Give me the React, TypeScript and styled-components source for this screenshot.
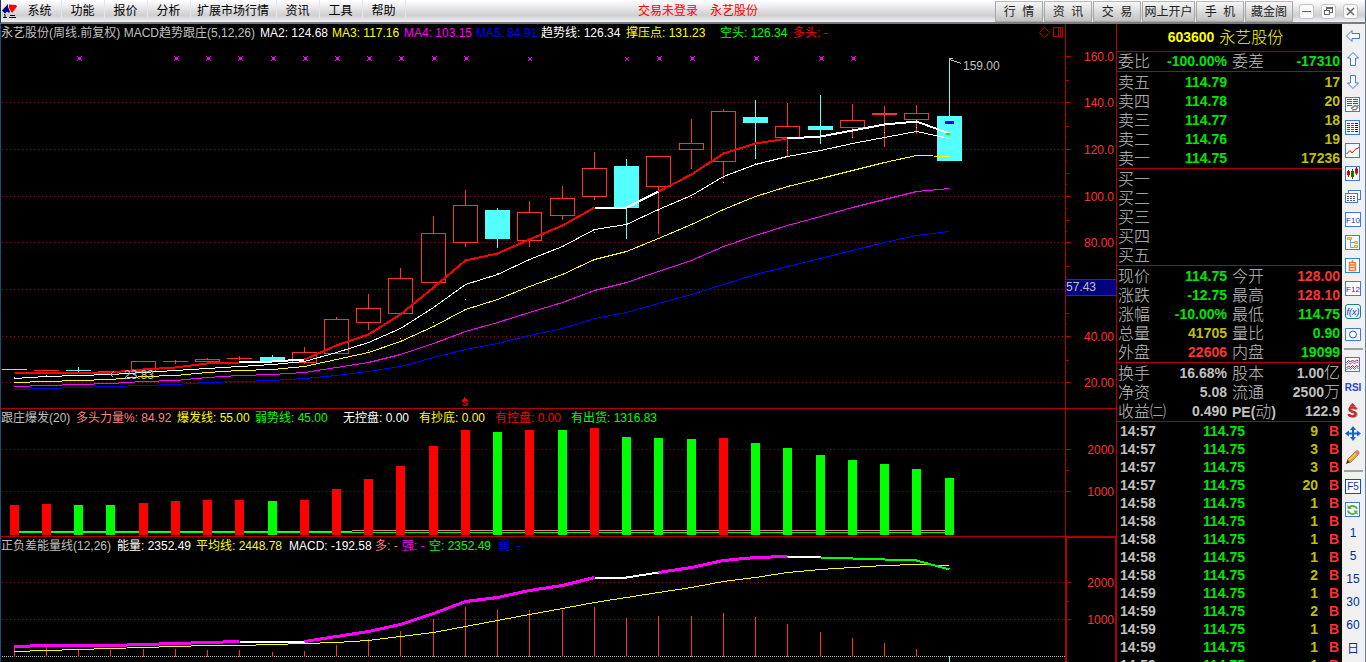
import React from "react";
import styled, { createGlobalStyle, css } from "styled-components";

const RED = "#ff3232";
const LINE = "#b40000";
const GREY = "#c0c0c0";
const GREEN = "#00e600";
const OLIVE = "#c0c000";
const CYAN = "#54ffff";

const GlobalStyle = createGlobalStyle`
  * { box-sizing: border-box; }
  html, body { margin: 0; background: #000; overflow: hidden; }
  body, button, table {
    font-family: "Liberation Sans", "Noto Sans CJK SC", sans-serif;
    font-size: 12px;
  }
`;

const Window = styled.div`
  display: flex;
  flex-direction: column;
  height: 100vh;
  min-height: 400px;
  background: #000;
  overflow: hidden;
`;

/* ---------- title bar ---------- */

const TitleBar = styled.header`
  flex: none;
  display: grid;
  grid-template-columns: 1fr auto 1fr;
  align-items: center;
  height: 24px;
  border-left: 1px solid #16365c;
  border-right: 1px solid #4a7090;
  border-bottom: 2px solid #7c7c7c;
  background: linear-gradient(#ffffff 0%, #f4f4f8 18%, #d0d0d0 68%, #d4d4d6 76%, #e6e6ee 90%, #eeeef4 100%);
`;

const MenuArea = styled.div`
  display: flex;
  align-items: center;
`;

const Logo = styled.svg`
  display: block;
  width: 18px;
  height: 18px;
`;

const Menu = styled.nav`
  display: flex;
`;

const MenuItem = styled.button<{ $wide?: boolean }>`
  width: ${(p) => (p.$wide ? 86 : 43)}px;
  height: 22px;
  padding: 1px 1px 0 0;
  border: 0;
  border-right: 1px solid #e4e4ea;
  background: none;
  color: #000;
  line-height: 21px;
  white-space: nowrap;
`;

const Status = styled.div`
  display: flex;
  gap: 12px;
  padding: 1px 0 0 30px;
  color: #f00;
  line-height: 21px;
`;

const TitleActions = styled.div`
  display: flex;
  justify-content: flex-end;
  align-items: center;
  gap: 1px;
  padding-right: 7px;
`;

const TitleButton = styled.button`
  width: 48px;
  height: 21px;
  padding: 1px 0 0;
  border: 1px solid #a8a8a8;
  border-top-color: #b8b8b8;
  background: linear-gradient(#f6f6f6, #dcdcdc 50%, #c2c2c2);
  color: #222;
  line-height: 18px;
  white-space: nowrap;
  &:nth-of-type(4) { width: 53px; }
`;

const WindowButtons = styled.div`
  display: flex;
  gap: 7px;
  margin-left: 5px;
`;

const WindowButton = styled.button`
  width: 15px;
  height: 15px;
  padding: 0;
  border: 1px solid #c4c4c4;
  border-radius: 3px;
  background: #fafafa;
  svg { display: block; width: 13px; height: 13px; }
`;

/* ---------- body ---------- */

const Body = styled.div`
  flex: 1;
  display: flex;
  min-height: 0;
  border-left: 1px solid #1b5078;
`;

const Charts = styled.main`
  flex: 1;
  display: flex;
  flex-direction: column;
  min-width: 0;
`;

const Pane = styled.section<{ $height?: number }>`
  display: grid;
  grid-template-columns: minmax(0, 1fr) 51px;
  grid-template-rows: minmax(0, 1fr);
  ${(p) => (p.$height ? css`flex: none; height: ${p.$height}px; border-bottom: 1px solid ${LINE};` : css`flex: 1; min-height: 0;`)}
`;

const Legend = styled.div<{ $cols: string }>`
  grid-area: 1 / 1;
  display: grid;
  grid-template-columns: ${(p) => p.$cols} 1fr auto;
  height: 19px;
  line-height: 19px;
  white-space: nowrap;
  z-index: 1;
`;

const LegendItem = styled.span<{ $color: string }>`
  color: ${(p) => p.$color};
`;

const LegendTools = styled.svg`
  grid-column: -2;
  width: 26px;
  height: 17px;
`;

const Plot = styled.svg`
  grid-area: 1 / 1;
  display: block;
  width: 100%;
  height: 100%;
  shape-rendering: crispEdges;
  overflow: hidden;
  font-size: 12px;
`;

const AxisBox = styled.div<{ $active?: boolean }>`
  grid-area: 1 / 2;
  overflow: hidden;
  border-left: ${(p) => (p.$active ? 2 : 1)}px solid ${LINE};
  ${(p) => p.$active && css`border-top: 1px solid ${LINE}; border-right: 1px solid ${LINE};`}
  svg {
    display: block;
    width: 100%;
    height: 100%;
    shape-rendering: crispEdges;
    font-size: 12px;
  }
`;

/* ---------- quote panel ---------- */

const Quote = styled.aside`
  flex: none;
  width: 226px;
  border-left: 1px solid ${LINE};
  overflow: hidden;
  color: ${GREY};
`;

const StockTitle = styled.h1`
  display: flex;
  justify-content: center;
  align-items: center;
  gap: 5px;
  height: 28px;
  margin: 0;
  padding-right: 8px;
  border-bottom: 1px solid ${LINE};
  color: #ff0;
  font-size: 16px;
  font-weight: 300;
  line-height: 27px;
  b { font-size: 14px; font-weight: 700; }
`;

const Table = styled.table`
  width: 100%;
  table-layout: fixed;
  border-collapse: collapse;
  th, td { padding: 0; white-space: nowrap; }
`;

const Block = styled.div<{ $pad?: boolean }>`
  padding-top: ${(p) => (p.$pad ? 1 : 0)}px;
  border-bottom: 1px solid ${LINE};
`;

const QuoteRow = styled.tr`
  height: 19px;
  line-height: 19px;
`;

const Label = styled.th<{ $second?: boolean }>`
  padding-left: ${(p) => (p.$second ? 5 : 1)}px !important;
  overflow: visible;
  font-size: 16px;
  font-weight: 300;
  text-align: left;
  b { font-size: 14px; font-weight: 700; line-height: 1; }
`;

const Value = styled.td<{ $color?: string; $last?: boolean }>`
  padding-right: ${(p) => (p.$last ? 2 : 0)}px !important;
  color: ${(p) => p.$color || GREY};
  font-size: 14px;
  font-weight: 700;
  text-align: right;
  i { font-size: 16px; font-style: normal; font-weight: 300; line-height: 1; }
`;

const TradeRow = styled.tr`
  height: 18px;
  line-height: 18px;
  font-size: 14px;
  font-weight: 700;
`;

const TradeCell = styled.td<{ $color: string; $left?: boolean; $side?: boolean }>`
  padding-left: ${(p) => (p.$left ? 3 : 0)}px !important;
  padding-right: ${(p) => (p.$side ? 3 : 0)}px !important;
  color: ${(p) => p.$color};
  text-align: ${(p) => (p.$left ? "left" : "right")};
`;

/* ---------- tool strip ---------- */

const Strip = styled.nav`
  flex: none;
  display: flex;
  flex-direction: column;
  width: 24px;
  border-right: 1px solid #6a8094;
  background: #f0f0f0;
  overflow: hidden;
`;

const ToolButton = styled.button`
  flex: none;
  display: flex;
  justify-content: center;
  align-items: center;
  width: 22px;
  height: 23px;
  padding: 0;
  border: 0;
  background: none;
  color: #003090;
  svg { display: block; width: 16px; height: 16px; overflow: visible; }
`;

const Separator = styled.hr`
  flex: none;
  width: 19px;
  height: 2px;
  margin: 2px 2px 3px;
  border: 0;
  background: #a0a0a0;
`;

/* ---------- data ---------- */

const X = (i: number) => Math.floor(13.1 + 32.24 * i);

type Candle = [kind: "up" | "down", top: number, bottom: number, high: number, low: number];
const candles: Candle[] = [
  ["down", 369, 370, 369, 370], ["up", 370, 370, 370, 370], ["down", 370, 371, 367, 373],
  ["up", 371, 371, 371, 371], ["up", 361, 371, 361, 371], ["up", 361, 361, 360, 364],
  ["up", 359, 361, 358, 361], ["up", 358, 358, 356, 360], ["down", 357, 361, 355, 361],
  ["up", 352, 362, 347, 364], ["up", 319, 353, 317, 353], ["up", 308, 322, 294, 330],
  ["up", 278, 313, 268, 313], ["up", 233, 282, 216, 282], ["up", 205, 242, 190, 247],
  ["down", 210, 239, 208, 248], ["up", 212, 240, 201, 247], ["up", 198, 215, 186, 220],
  ["up", 168, 196, 152, 200], ["down", 166, 208, 159, 239], ["up", 156, 186, 156, 234],
  ["up", 143, 149, 119, 169], ["up", 111, 161, 109, 179], ["down", 117, 123, 100, 159],
  ["up", 126, 137, 103, 156], ["down", 126, 130, 95, 144], ["up", 120, 127, 104, 137],
  ["up", 113, 114, 106, 147], ["up", 113, 119, 105, 134], ["down", 116, 161, 58, 161],
];

const trend = [372, 372, 372, 372, 369, 367, 363, 362, 361, 359, 345, 334, 314, 287, 260, 253, 239, 225, 207, 207, 191, 174, 153, 143, 138, 136, 130, 124, 121, 133];
const ma2 = [378, 376, 375, 374, 372, 370, 368, 366, 364, 361, 352, 342, 328, 307, 284, 274, 259, 246, 229, 224, 209, 195, 176, 164, 156, 150, 143, 137, 131, 138];
const ma3 = [382, 381, 380, 379, 376, 375, 372, 370, 369, 366, 359, 352, 341, 326, 309, 299, 286, 274, 259, 251, 238, 224, 209, 196, 186, 178, 170, 162, 155, 156];
const ma4 = [386, 385, 384, 383, 381, 380, 377, 375, 374, 372, 367, 362, 354, 343, 331, 322, 312, 302, 290, 282, 271, 260, 246, 235, 225, 216, 207, 199, 191, 188];
const ma5 = [389, 388, 387, 386, 385, 384, 382, 381, 380, 378, 375, 371, 366, 357, 349, 343, 335, 328, 318, 312, 303, 294, 284, 274, 266, 258, 250, 242, 235, 231];
const supports: [number, number][] = [[0, 377], [1, 375], [11, 350], [12, 338], [13, 322], [14, 299], [15, 273], [16, 259], [17, 246], [18, 232], [19, 215], [20, 210], [21, 197], [22, 182], [23, 163], [24, 150], [25, 142], [26, 137], [27, 132], [28, 127]];
const markers = [2, 5, 6, 7, 8, 9, 10, 11, 12, 13, 14, 16, 19, 20, 21, 23, 25, 26];

const barTops = [505, 504, 505, 505, 503, 501, 500, 500, 501, 500, 489, 479, 466, 446, 430, 432, 430, 430, 428, 437, 438, 439, 438, 443, 448, 455, 460, 464, 469, 478];
const greenBars = [2, 3, 8, 15, 17, 19, 20, 21, 23, 24, 25, 26, 27, 28, 29];

const energy = [646, 645, 645, 645, 644, 643, 642, 641, 641, 641, 636, 631, 624, 613, 601, 597, 590, 585, 577, 577, 572, 567, 560, 557, 556, 557, 558, 559, 560, 569];
const average = [651, 650, 649, 648, 647, 646, 645, 645, 644, 643, 642, 640, 636, 632, 626, 620, 614, 608, 602, 597, 592, 587, 581, 577, 572, 569, 567, 565, 564, 565];
const stems = [647, 647, 649, 650, 649, 649, 650, 650, 652, 651, 645, 639, 631, 619, 607, 610, 610, 610, 607, 618, 616, 616, 613, 617, 624, 632, 638, 643, 649];

const points = (ys: number[], from = 0, to = ys.length - 1) =>
  ys.slice(from, to + 1).map((y, k) => `${X(from + k) + 0.5},${y + 0.5}`).join(" ");

const Series = ({ ys, color, width = 1, from, to }: { ys: number[]; color: string; width?: number; from?: number; to?: number }) => (
  <polyline points={points(ys, from, to)} fill="none" stroke={color} strokeWidth={width} />
);

const GridLine = ({ y, color = LINE, dash = "1 3" }: { y: number; color?: string; dash?: string }) => (
  <line x1="1" x2="100%" y1={y + 0.5} y2={y + 0.5} stroke={color} strokeDasharray={dash} />
);

const CandleShape = ({ i, c }: { i: number; c: Candle }) => {
  const [kind, top, bottom, high, low] = c;
  const x = X(i);
  if (kind === "down") {
    return (
      <g fill={CYAN}>
        <rect x={x} y={high} width="1" height={low - high} />
        <rect x={x - 12} y={top} width="25" height={bottom - top} />
      </g>
    );
  }
  return (
    <g fill={RED}>
      <rect x={x} y={high} width="1" height={top - high} />
      <rect x={x} y={bottom} width="1" height={low - bottom} />
      {bottom - top > 1 ? (
        <rect x={x - 11.5} y={top + 0.5} width="24" height={bottom - top} fill="none" stroke={RED} />
      ) : (
        <rect x={x - 12} y={top} width="25" height={bottom - top + 1} />
      )}
    </g>
  );
};

type Tick = [y: number, label: string];
const Axis = ({ ticks, top, step, divisions, active, children }: { ticks: Tick[]; top: number; step: number; divisions: number; active?: boolean; children?: React.ReactNode }) => (
  <AxisBox $active={active}>
    <svg>
      <g transform={`translate(${active ? -1 : 0} ${-top})`}>
        {ticks.map(([y, label], t) => (
          <g key={y}>
            <rect x="0" y={y} width="5" height="1" fill={LINE} />
            {t < ticks.length - 1 && Array.from({ length: divisions - 1 }, (_, k) => k + 1).map((k) => (
              <rect key={k} x="0" y={Math.round(y + (step * k) / divisions)} width={k * 2 === divisions ? 3 : 1} height="1" fill={LINE} />
            ))}
            {label && <text x="48" y={y + 5} textAnchor="end" fill={RED}>{label}</text>}
          </g>
        ))}
        {children}
      </g>
    </svg>
  </AxisBox>
);

/* ---------- panes ---------- */

type Entry = [text: string, color: string];
const legend1: Entry[] = [
  ["永艺股份(周线.前复权) MACD趋势跟庄(5,12,26)", GREY], ["MA2: 124.68", "#fff"], ["MA3: 117.16", "#ff0"],
  ["MA4: 103.15", "#f0f"], ["MA5: 84.91", "#00f"], ["趋势线: 126.34", "#fff"], ["撑压点: 131.23", "#ff0"],
  ["空头: 126.34", "#0f0"], ["多头: -", "#f00"],
];
const legend2: Entry[] = [
  ["跟庄爆发(20)", GREY], ["多头力量%: 84.92", "#ff8080"], ["爆发线: 55.00", "#ff0"], ["弱势线: 45.00", "#0f0"],
  ["无控盘: 0.00", "#fff"], ["有抄底: 0.00", "#ff0"], ["有控盘: 0.00", "#f00"], ["有出货: 1316.83", "#0f0"],
];
const legend3: Entry[] = [
  ["正负差能量线(12,26)", GREY], ["能量: 2352.49", "#fff"], ["平均线: 2448.78", "#ff0"], ["MACD: -192.58", "#fff"],
  ["多: -", "#ff8080"], ["强: -", "#f0f"], ["空: 2352.49", "#0f0"], ["弱: -", "#00f"],
];

const Entries = ({ items }: { items: Entry[] }) => (
  <>{items.map(([text, color]) => <LegendItem key={text} $color={color}>{text}</LegendItem>)}</>
);

const PricePane = () => (
  <Pane $height={385}>
    <Legend $cols="259px 72px 72px 72px 65px 85px 94px 73px 40px">
      <Entries items={legend1} />
      <LegendTools fill="none" stroke={LINE}>
        <path d="M5.5 3.5l5 5-5 5-5-5z" />
        <path d="M14.500 3.500h9v9h-9zM19.500 3.500v9M21.500 3.500v9" shapeRendering="crispEdges" />
      </LegendTools>
    </Legend>
    <Plot>
      <g transform="translate(0 -24)">
        {[102, 149, 196, 242, 289, 336, 382].map((y) => <GridLine key={y} y={y} />)}
        {markers.map((i) => (
          <g key={i} fill="#f0f">
            {i === 16 || i === 19 ? (
              <path d={`M${X(i) - 1} 57h1v1h2v-1h1v1h-1v2h1v1h-1v-1h-2v1h-1v-1h1v-2h-1z`} />
            ) : (
              <path d={`M${X(i) - 1} 56h1v1h3v-1h1v1h-1v3h1v1h-1v-1h-3v1h-1v-1h1v-3h-1z`} />
            )}
          </g>
        ))}
        {candles.map((c, i) => <CandleShape key={i} i={i} c={c} />)}
        <Series ys={ma5} color="#00f" />
        <Series ys={ma4} color="#f0f" />
        <Series ys={ma3} color="#ff0" />
        <Series ys={ma2} color="#fff" />
        <Series ys={trend} color="#f00" width={2} to={7} />
        <Series ys={trend} color="#fff" width={2} from={7} to={9} />
        <Series ys={trend} color="#f00" width={2} from={9} to={18} />
        <Series ys={trend} color="#fff" width={2} from={18} to={20} />
        <Series ys={trend} color="#f00" width={2} from={20} to={24} />
        <Series ys={trend} color="#fff" width={2} from={24} to={29} />
        {supports.map(([i, y]) => <rect key={i} x={X(i)} y={y} width="1" height="1" fill="#ff0" />)}
        <rect x="944" y="121" width="9" height="3" fill="#00f" />
        <rect x="945" y="133" width="4" height="2" fill="#0f0" />
        <path d="M948.500 58.500h3M948.500 58.500v4M949 59.500l11 4" stroke={GREY} fill="none" />
        <text x="962" y="70" fill={GREY}>159.00</text>
        <path d="M109.500 374.500h6M112.500 371.500l-3 3 3 3" stroke={GREY} fill="none" />
        <text x="123" y="379" fill={GREY}>23.83</text>
        <path d="M461 400.500h6M462 399.500h4M463.500 397v3" stroke="#f00" />
        <text x="464" y="406" textAnchor="middle" fill="#f00" fontSize="9" fontWeight="700">S</text>
      </g>
    </Plot>
    <Axis top={24} step={47} divisions={4} ticks={[[56, "160.0"], [102, "140.0"], [149, "120.0"], [196, "100.0"], [242, "80.00"], [289, ""], [336, "40.00"], [382, "20.00"]]}>
      <rect x="0" y="279" width="50" height="17" fill={LINE} />
      <rect x="0" y="280" width="50" height="15" fill="#000080" />
      <text x="0" y="291" fill={GREY}>57.43</text>
    </Axis>
  </Pane>
);

const BurstPane = () => (
  <Pane $height={128}>
    <Legend $cols="75px 101px 78px 88px 76px 76px 76px 90px">
      <Entries items={legend2} />
    </Legend>
    <Plot>
      <g transform="translate(0 -409)">
        <GridLine y={449} color="#900000" />
        <GridLine y={491} color="#900000" />
        <path d="M18 531.500H351" stroke="#ff8080" />
        <path d="M351 530.500H949" stroke="#ff8080" />
        <path d="M18 532.500H949" stroke="#0f0" />
        {barTops.map((y, i) => (
          <rect key={i} x={X(i) - 4} y={y} width="9" height={535 - y} fill={greenBars.includes(i) ? "#0f0" : "#f00"} />
        ))}
      </g>
    </Plot>
    <Axis top={409} step={42} divisions={4} ticks={[[449, "2000"], [491, "1000"]]} />
  </Pane>
);

const EnergyPane = () => (
  <Pane>
    <Legend $cols="116px 79px 93px 86px 27px 27px 69px 40px">
      <Entries items={legend3} />
    </Legend>
    <Plot>
      <g transform="translate(0 -537)">
        <GridLine y={582} />
        <GridLine y={619} />
        <GridLine y={656} color="#c0c0c0" dash="1 1" />
        {stems.map((y, i) => <rect key={i} x={X(i)} y={y} width="1" height={657 - y} fill={RED} />)}
        <rect x={X(29)} y="656" width="1" height="8" fill={CYAN} />
        <Series ys={average} color="#ff0" />
        <Series ys={energy} color="#f0f" width={3} to={7} />
        <Series ys={energy} color="#fff" width={2} from={7} to={9} />
        <Series ys={energy} color="#f0f" width={3} from={9} to={18} />
        <Series ys={energy} color="#fff" width={2} from={18} to={20} />
        <Series ys={energy} color="#f0f" width={3} from={20} to={24} />
        <Series ys={energy} color="#fff" width={2} from={24} to={25} />
        <Series ys={energy} color="#0f0" width={2} from={25} to={29} />
      </g>
    </Plot>
    <Axis active top={538} step={37} divisions={2} ticks={[[582, "2000"], [619, "1000"]]} />
  </Pane>
);

/* ---------- quote data ---------- */

const sells = [["卖五", "114.79", "17"], ["卖四", "114.78", "20"], ["卖三", "114.77", "18"], ["卖二", "114.76", "19"], ["卖一", "114.75", "17236"]];
const buys = ["买一", "买二", "买三", "买四", "买五"];
const prices: [string, string, string, string, string, string][] = [
  ["现价", "114.75", GREEN, "今开", "128.00", RED],
  ["涨跌", "-12.75", GREEN, "最高", "128.10", RED],
  ["涨幅", "-10.00%", GREEN, "最低", "114.75", GREEN],
  ["总量", "41705", OLIVE, "量比", "0.90", GREEN],
  ["外盘", "22606", RED, "内盘", "19099", GREEN],
];
const trades: [string, string][] = [
  ["14:57", "9"], ["14:57", "3"], ["14:57", "3"], ["14:57", "20"], ["14:58", "1"], ["14:58", "1"], ["14:58", "1"],
  ["14:58", "1"], ["14:58", "2"], ["14:59", "1"], ["14:59", "2"], ["14:59", "1"], ["14:59", "1"], ["14:59", "1"],
];

const Columns = () => (
  <colgroup>
    <col width="36" /><col width="74" /><col width="39" /><col />
  </colgroup>
);

const QuotePanel = () => (
  <Quote>
    <StockTitle><b>603600</b>永艺股份</StockTitle>
    <Block>
      <Table>
        <Columns />
        <tbody>
          <QuoteRow>
            <Label scope="row">委比</Label><Value $color={GREEN}>-100.00%</Value>
            <Label scope="row" $second>委差</Label><Value $last $color={GREEN}>-17310</Value>
          </QuoteRow>
        </tbody>
      </Table>
    </Block>
    <Block $pad>
      <Table>
        <Columns />
        <tbody>
          {sells.map(([name, price, volume]) => (
            <QuoteRow key={name}>
              <Label scope="row">{name}</Label><Value $color={GREEN}>{price}</Value>
              <Value $last $color={OLIVE} colSpan={2}>{volume}</Value>
            </QuoteRow>
          ))}
        </tbody>
      </Table>
    </Block>
    <Block $pad>
      <Table>
        <Columns />
        <tbody>
          {buys.map((name) => (
            <QuoteRow key={name}><Label scope="row">{name}</Label><Value /><Value colSpan={2} /></QuoteRow>
          ))}
        </tbody>
      </Table>
    </Block>
    <Block $pad>
      <Table>
        <Columns />
        <tbody>
          {prices.map(([a, av, ac, b, bv, bc]) => (
            <QuoteRow key={a}>
              <Label scope="row">{a}</Label><Value $color={ac}>{av}</Value>
              <Label scope="row" $second>{b}</Label><Value $last $color={bc}>{bv}</Value>
            </QuoteRow>
          ))}
        </tbody>
      </Table>
    </Block>
    <Block $pad>
      <Table>
        <Columns />
        <tbody>
          <QuoteRow>
            <Label scope="row">换手</Label><Value>16.68%</Value>
            <Label scope="row" $second>股本</Label><Value $last>1.00<i>亿</i></Value>
          </QuoteRow>
          <QuoteRow>
            <Label scope="row">净资</Label><Value>5.08</Value>
            <Label scope="row" $second>流通</Label><Value $last>2500<i>万</i></Value>
          </QuoteRow>
          <QuoteRow>
            <Label scope="row">收益㈡</Label><Value>0.490</Value>
            <Label scope="row" $second><b>PE(</b>动<b>)</b></Label><Value $last>122.9</Value>
          </QuoteRow>
        </tbody>
      </Table>
    </Block>
    <Table>
      <colgroup>
        <col width="85" /><col width="43" /><col width="73" /><col />
      </colgroup>
      <tbody>
        {trades.map(([time, count], i) => (
          <TradeRow key={i}>
            <TradeCell $left $color={GREY}>{time}</TradeCell>
            <TradeCell $color={GREEN}>114.75</TradeCell>
            <TradeCell $color={OLIVE}>{count}</TradeCell>
            <TradeCell $side $color={RED}>B</TradeCell>
          </TradeRow>
        ))}
      </tbody>
    </Table>
  </Quote>
);

/* ---------- tool strip icons ---------- */

const Frame = ({ color = "#3c78e6", children }: { color?: string; children?: React.ReactNode }) => (
  <svg viewBox="0 0 16 16">
    <rect x=".5" y=".5" width="14" height="14" fill="#fff" stroke={color} shapeRendering="crispEdges" />
    {children}
  </svg>
);

const FrameText = ({ label, color = "#3c78e6", size = 8 }: { label: string; color?: string; size?: number }) => (
  <svg viewBox="0 0 16 16">
    <rect x=".5" y=".5" width="15" height="14" fill="#fff" stroke={color} shapeRendering="crispEdges" />
    <text x="8" y="11" textAnchor="middle" fontSize={size} fill="#1432b4">{label}</text>
  </svg>
);

const dashes = (x: number, color: string, rows: number[], width = 3) =>
  rows.map((y) => <rect key={x + "-" + y} x={x} y={y} width={width} height="1" fill={color} shapeRendering="crispEdges" />);

const arrowPath = "M1.500 8L7 2.500V5.500H14.500V10.500H7V13.500Z";
const Arrow = ({ turn }: { turn: number }) => (
  <svg viewBox="0 0 16 16"><path d={arrowPath} transform={`rotate(${turn} 8 8)`} fill="#fff" stroke="#3c78e6" /></svg>
);

const icons: [string, React.ReactNode][] = [
  ["后退", <Arrow turn={0} />],
  ["上一只", <Arrow turn={90} />],
  ["下一只", <Arrow turn={-90} />],
  ["报表", (
    <Frame>
      {dashes(2, "#009000", [2, 4, 6, 8], 5)}
      {dashes(8, "#ff0000", [2, 4, 6], 5)}
      <path d="M6 11.500l4-3 2 1 1.500-1.500M7 13l4-.5 2-3" fill="none" stroke="#888" strokeWidth="1.600" />
    </Frame>
  )],
  ["行情表", (
    <Frame>
      {dashes(2, "#ff0000", [3, 5, 7, 9, 11])}
      {dashes(6, "#009000", [3, 5, 7, 9, 11])}
      {dashes(10, "#0000ff", [3, 5, 7, 9, 11])}
    </Frame>
  )],
  ["分时图", <Frame><path d="M1.500 11l3.500-3.500 2 2.500 4-4.500 1 .5 2-2" fill="none" stroke="#e00000" /></Frame>],
  ["K线图", (
    <Frame>
      <path d="M3.500 4v7M11.500 1v8" stroke="#e00000" /><path d="M7.500 3v10" stroke="#008000" />
      <path d="M2 5h3v4H2zM10 2.500h3v5h-3z" fill="#e00000" /><path d="M6 5h3v6H6z" fill="#008000" />
    </Frame>
  )],
  ["多窗口", (
    <svg viewBox="0 0 16 16" shapeRendering="crispEdges">
      <path d="M3.500 1.500h12v9h-12zM.5 4.500h12v9H.5z" fill="#fff" stroke="#3c78e6" />
      <path d="M1 5h11v8H1z" fill="#fff" />
      <path d="M2 7.500h9M2 9.500h9M2 11.500h9" stroke="#555" strokeDasharray="2 1" />
    </svg>
  )],
  ["F10", <FrameText label="F10" />],
  ["结构树", (
    <Frame color="#1e8ce6">
      <path d="M5.500 4v8.500H9M5.500 7.500H9" fill="none" stroke="#64a0f0" />
      <path d="M2.500 2.500h4v2h-4zM9.500 6.500h3v2h-3zM9.500 10.500h3v2h-3z" fill="#ffe060" stroke="#e6a000" />
    </Frame>
  )],
  ["自选", (
    <Frame color="#1e8ce6">
      <path d="M4.500 4.500h6v8h-6zM4.500 7h6M4.500 9.500h6M7.500 2v2" fill="none" stroke="#ff7832" strokeWidth="1.500" />
    </Frame>
  )],
  ["F12", <FrameText label="F12" />],
  ["公式", (
    <svg viewBox="0 0 16 16">
      <rect x=".5" y=".5" width="15" height="14" rx="2.500" fill="#e8f4ff" stroke="#148282" />
      <text x="8" y="11" textAnchor="middle" fontSize="9" fontStyle="italic" fill="#1432b4">f(x)</text>
    </svg>
  )],
  ["圆圈", <svg viewBox="0 0 16 16"><path d="M.5 1.500h15v12H.5z" fill="#fff" stroke="#3c78e6" /><circle cx="8" cy="7.500" r="3.500" fill="none" stroke="#0064c8" /></svg>],
];

const wave = (y: number) => `M1.500 ${y}l2-2 2 1.500 2-2 2 2 2-2 2 1`;
const icons2: [string, React.ReactNode][] = [
  ["叠加", <Frame><path d={wave(5.5)} fill="none" stroke="#e00000" /><path d={wave(7.5)} fill="none" stroke="#6464e6" /><path d={wave(11)} fill="none" stroke="#e00000" /><path d={wave(13)} fill="none" stroke="#6464e6" /></Frame>],
  ["RSI", <svg viewBox="0 0 16 16"><text x="8" y="11" textAnchor="middle" fontSize="10" fontWeight="700" fill="#2846d2">RSI</text></svg>],
  ["信号", (
    <svg viewBox="0 0 16 16">
      <path d="M12 6.500c-1-2-6.500-2.300-6.500.5s6 1.500 6 4.500-6.500 2.500-7 0" fill="none" stroke="#999" strokeWidth="2.500" />
      <path d="M11 6c-1-2-6.500-2.300-6.500.5s6 1.500 6 4.500-6.500 2.500-7 0" fill="none" stroke="#c82828" strokeWidth="2.300" />
      <path d="M7.500 0L11 3.500H4z" fill="#c82828" />
    </svg>
  )],
  ["移动", (
    <svg viewBox="0 0 16 16" fill="#1464d2">
      <path d="M8 0l3 4H5zM8 15l3-4H5zM0 7.500l4-3v6zM16 7.500l-4-3v6z" /><path d="M8 3v10M3 7.500h10" stroke="#1464d2" strokeWidth="2" />
    </svg>
  )],
  ["画线", (
    <svg viewBox="0 0 16 16">
      <path d="M1 15l1.500-4.500 2.500 3z" fill="#503214" /><path d="M2.500 10.500L10 3l3 3-7.500 7.500z" fill="#f0a032" stroke="#a06414" strokeWidth=".7" />
      <path d="M4 11.500L11.500 4" stroke="#ffe090" /><path d="M10 3l1.500-1.500q2.500-.5 3 2.500L13 6z" fill="#e67878" stroke="#b09090" strokeWidth=".7" />
    </svg>
  )],
];

const icons3: [string, React.ReactNode][] = [
  ["F5", <FrameText label="F5" color="#0050c8" size={10} />],
  ["刷新", (
    <Frame>
      <path d="M12 7a4.500 3.500 0 0 0-7.500-2M3 8.500a4.500 3.500 0 0 0 7.500 2.500" fill="none" stroke="#50b43c" strokeWidth="2" />
      <path d="M2.500 2.500v4.500h4.500zM12.500 13V8.500H8z" fill="#50b43c" />
    </Frame>
  )],
  ["1分钟", "1"], ["5分钟", "5"], ["15分钟", "15"], ["30分钟", "30"], ["60分钟", "60"], ["日线", "日"],
];

const Tools = ({ items }: { items: [string, React.ReactNode][] }) => (
  <>{items.map(([name, icon]) => <ToolButton key={name} aria-label={name}>{icon}</ToolButton>)}</>
);

/* ---------- page ---------- */

export default function App() {
  return (
    <Window>
      <GlobalStyle />
      <TitleBar>
        <MenuArea>
          <Logo viewBox="0 0 18 18" aria-hidden="true">
            <path d="M1 8.500L7 2v3l2 4.500-1 1.500-2-1.500-2 2z" fill="#000080" />
            <path d="M8 2.500l7 .5 1 1.500-5 6.500-3-5z" fill="#f00" />
            <path d="M3 12.500h1v3M2 15.500h4M8 15.500h7M9 13.500h5" stroke="#000" fill="none" />
          </Logo>
          <Menu>
            {["系统", "功能", "报价", "分析", "扩展市场行情", "资讯", "工具", "帮助"].map((name) => (
              <MenuItem key={name} $wide={name.length > 2}>{name}</MenuItem>
            ))}
          </Menu>
        </MenuArea>
        <Status><span>交易未登录</span><span>永艺股份</span></Status>
        <TitleActions>
          {["行\u00a0\u00a0情", "资\u00a0\u00a0讯", "交\u00a0\u00a0易", "网上开户", "手\u00a0\u00a0机", "藏金阁"].map((name) => (
            <TitleButton key={name}>{name}</TitleButton>
          ))}
          <WindowButtons>
            <WindowButton aria-label="最小化"><svg stroke="#666"><path d="M2 6.500h9" strokeWidth="1" /></svg></WindowButton>
            <WindowButton aria-label="还原"><svg stroke="#666" fill="none" shapeRendering="crispEdges"><path d="M4.500 5V2.500h6v5H8M2.500 5.500h5v4h-5zM4.500 3.500h6" /></svg></WindowButton>
            <WindowButton aria-label="关闭"><svg stroke="#666" strokeWidth="1.500"><path d="M3 3l7 7M10 3l-7 7" /></svg></WindowButton>
          </WindowButtons>
        </TitleActions>
      </TitleBar>
      <Body>
        <Charts>
          <PricePane />
          <BurstPane />
          <EnergyPane />
        </Charts>
        <QuotePanel />
        <Strip>
          <Tools items={icons} />
          <Separator />
          <Tools items={icons2} />
          <Separator />
          <Tools items={icons3} />
        </Strip>
      </Body>
    </Window>
  );
}
